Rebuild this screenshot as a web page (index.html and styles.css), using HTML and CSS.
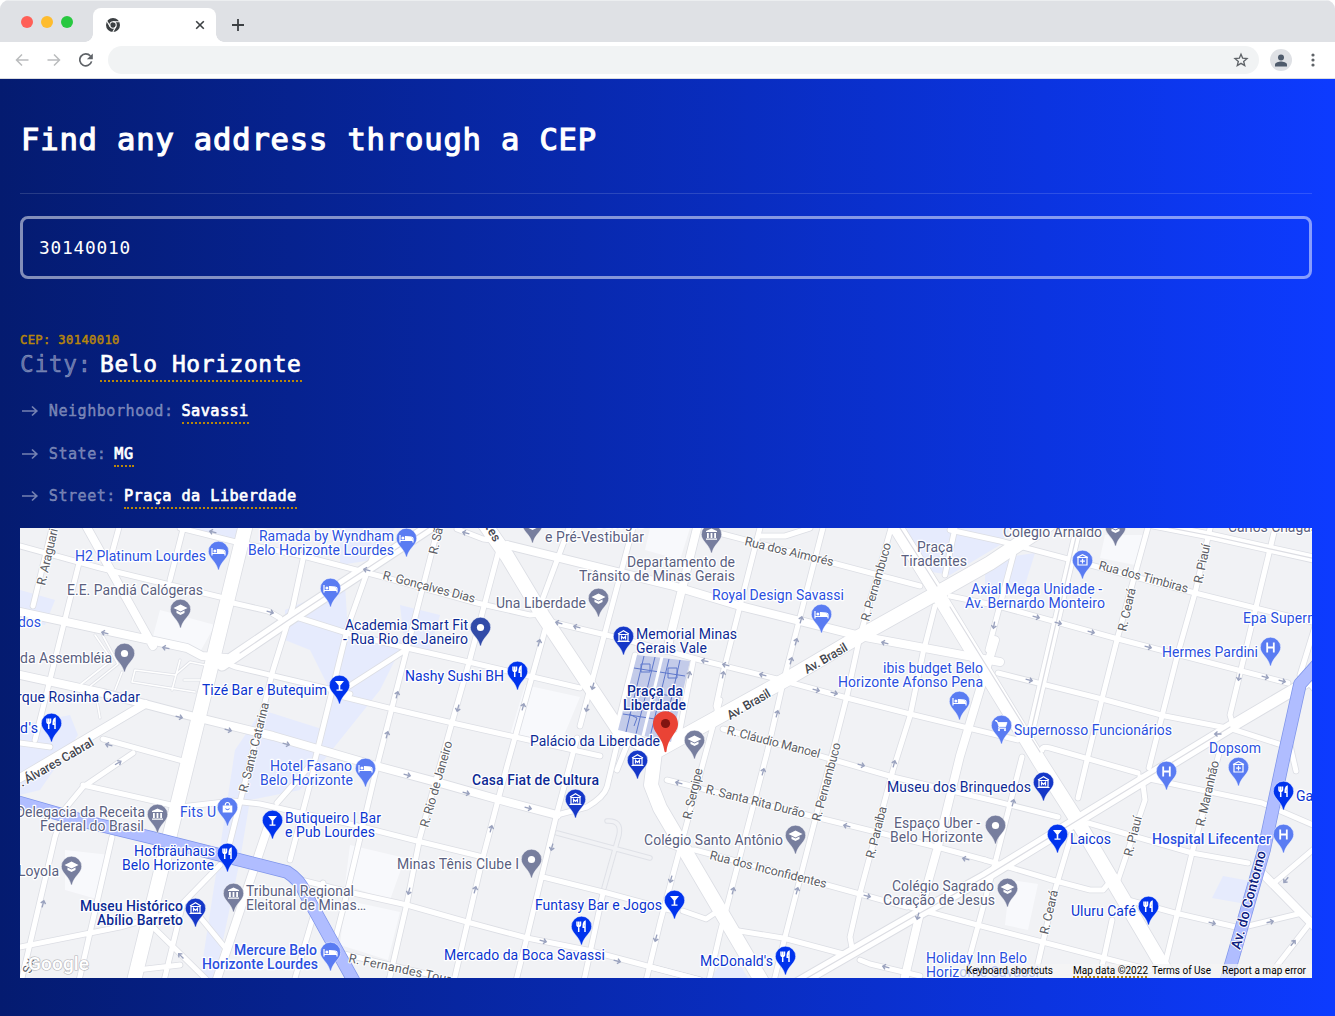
FILE: index.html
```html
<!DOCTYPE html>
<html lang="en">
<head>
<meta charset="utf-8">
<title>Find any address through a CEP</title>
<link rel="stylesheet" href="styles.css">
</head>
<body>
<div class="window">
  <div class="tabstrip">
    <div class="lights"><span class="light red"></span><span class="light yellow"></span><span class="light green"></span></div>
    <div class="tab">
      <svg width="14" height="14" viewBox="0 0 14 14"><circle cx="7" cy="7" r="7" fill="#3c4043"/><circle cx="7" cy="7" r="3.2" fill="#3c4043" stroke="#fff" stroke-width="1.1"/><path d="M7 3.7h6.3M4.2 8.6 1 3.2M9.9 8.6 6.8 14" stroke="#fff" stroke-width="1.1"/></svg>
      <svg width="10" height="10" viewBox="0 0 10 10"><path d="m1.2 1.2 7.6 7.6m0-7.6L1.2 8.8" stroke="#3c4043" stroke-width="1.6"/></svg>
    </div>
    <svg class="plus" width="12" height="12" viewBox="0 0 12 12"><path d="M6 0v12M0 6h12" stroke="#3c4043" stroke-width="1.8"/></svg>
  </div>
  <div class="toolbar">
    <svg width="14" height="12" viewBox="0 0 14 12" fill="none" stroke="#babcbe" stroke-width="1.5"><path d="M13.500 6H1.500M7 .5 1.500 6 7 11.500"/></svg>
    <svg width="14" height="12" viewBox="0 0 14 12" fill="none" stroke="#babcbe" stroke-width="1.5"><path d="M.5 6h12M7 .5 12.500 6 7 11.500"/></svg>
    <svg width="14" height="14" viewBox="0 0 14 14"><path d="M12.600 8.400A6 6 0 1 1 11.400 3" fill="none" stroke="#5f6368" stroke-width="1.700"/><path d="M13.800.4v5.900H7.900z" fill="#5f6368"/></svg>
    <div class="omnibox">
      <svg width="16" height="16" viewBox="0 0 24 24"><path d="m12 3.300 2.500 6 6.500.6-5 4.200 1.600 6.400-5.600-3.500-5.600 3.500L8 14.100 3 9.900l6.500-.6z" fill="none" stroke="#5f6368" stroke-width="2"/></svg>
    </div>
    <div class="avatar"><svg width="12" height="13" viewBox="0 0 12 13" fill="#4f5b6c"><circle cx="6" cy="3.500" r="3"/><path d="M0 12.500v-2C0 8.500 4 7.500 6 7.500s6 1 6 3v2z"/></svg></div>
    <svg width="4" height="14" viewBox="0 0 4 14" fill="#5f6368"><circle cx="2" cy="2" r="1.600"/><circle cx="2" cy="7" r="1.600"/><circle cx="2" cy="12" r="1.600"/></svg>
  </div>
  <main class="page">
    <h1 class="title">Find any address through a CEP</h1>
    <input class="search" type="text" value="30140010" aria-label="CEP">
    <section class="result">
      <div class="cep">CEP: 30140010</div>
      <h2 class="city"><span class="key">City:</span><span class="value">Belo Horizonte</span></h2>
      <ul class="fields">
        <li><svg class="arrow" viewBox="0 0 20 12"><path d="M2 6h15M12 1.500 16.800 6l-4.800 4.500"/></svg><span class="key">Neighborhood:</span><span class="value">Savassi</span></li>
        <li><svg class="arrow" viewBox="0 0 20 12"><path d="M2 6h15M12 1.500 16.800 6l-4.800 4.500"/></svg><span class="key">State:</span><span class="value">MG</span></li>
        <li><svg class="arrow" viewBox="0 0 20 12"><path d="M2 6h15M12 1.500 16.800 6l-4.800 4.500"/></svg><span class="key">Street:</span><span class="value">Praça da Liberdade</span></li>
      </ul>
    </section>
    <svg class="map" viewBox="20 528 1292 450">
      <defs>
        <g id="minor">
          <path d="M54 520 33 606M80 559 35 740M121 520 112 553M183 529 170 580M20 546 100 568 220 597M233 603 268 611 280 618M180 528 240 543 303 556 383 577 477 603 530 615 545 614"/>
          <path d="M20 743 50 747M103 739 190 763M226 660Q228 665 236 667L350 694M305 550 293 606 273 670 253 750 228 850M375 550 348 626 315 760 277 803"/>
          <path d="M293 616 350 634 407 648 473 663 580 688M407 649 340 692M340 696 393 709 457 724 600 756M440 520 407 649 377 766 347 893 330 960M500 546 470 659 453 719 420 837 407 903 388 985"/>
          <path d="M547 623 507 766 483 857 453 985M457 529 483 539 500 541M572 520 540 606M547 621 627 640 700 660 777 679 847 698 910 714 1018 740M635 520 580 726M133 753 83 787 64 810 55 837 22 978M83 785 180 807 233 801 260 804 350 824 413 840 483 857"/>
          <path d="M112 837 78 985M220 865 183 903 163 985M20 947 120 927 180 910M153 927 210 983M200 917 227 950M137 970 180 965M323 883 293 985M315 765 290 860M293 878 353 893 407 905 467 922 527 938 587 950 700 980M340 953 460 982"/>
          <path d="M577 738 557 813 527 937 515 985M543 877 607 893 670 910M603 893 583 985M720 700 660 923 645 985M683 911 706 919 718 911M733 930 783 938 847 955M860 960 870 964 920 976M650 967 700 980M627 745 617 770"/>
          <path d="M762 520 740 606 723 673 716 706 720 718M825 520 783 683 767 753 720 933 708 985M892 525 860 636 847 696 803 867 785 937 773 985M935 606 923 653 910 716 893 770 860 893 850 937 852 948M715 532 920 586"/>
          <path d="M760 536 785 536 810 528M950 596 998 606 1118 639 1288 683M723 729 820 756 893 777 990 800 1058 817M955 528 945 575M950 530 1000 541 1068 559 1195 593 1320 624M1150 520 1118 636 1102 699 1088 756 1078 798"/>
          <path d="M1212 520 1195 593 1178 653 1162 716 1149 768M1277 520 1230 715 1233 725M1317 620 1300 675M1016 545 988 650M998 673 1102 699 1165 716 1232 729 1285 746M1042 750Q1042 746 1050 748L1138 773M1140 777 1262 803 1320 828M1315 690 1302 675"/>
          <path d="M1088 823 1192 853 1248 863M1143 785 1145 800 1118 880M1220 750 1192 853 1160 985M1022 757 995 863 962 985M1072 833 1055 890 1033 985M985 860 1052 880 1090 890 1103 890 1115 876M1128 900 1175 913 1240 928 1302 913M910 907 985 927 1150 970M1112 920 1098 985"/>
          <path d="M1275 882 1315 848M1310 923 1262 985M1290 745 1296 771M667 780 807 815 937 847 985 860M660 840Q680 851 695 850L827 885 907 907"/>
          <path d="M617 745 607 787Q604 797 587 807L557 815M635 655 615 735M693 662 678 740"/>
        </g>
        <g id="medium">
          <path d="M85 524 153 646M20 612 187 648 202 656 226 658M20 675 103 693 187 715 273 736 380 767 440 783 500 800 557 815M507 545 670 585 740 606 860 636 1000 662M699 520 667 650M995 640 960 756 937 850 923 900 903 985M272 815 215 985"/>
          <path d="M1080 520 1030 735M1140 522 1212 536 1320 560M1262 873 1320 932M145 704 20 778"/>
        </g>
        <g id="dual"><path d="M222 665 287 621 433 525M1305 683 1232 726 1078 820 985 877 920 913 795 985"/></g>
        <g id="major">
          <path d="M247 520 190 753 133 985M482 520 507 556 543 616 620 732 655 752 651 785 660 808 764 985M655 752 787 679 860 636 937 593 990 563 1055 520M893 522 937 593 990 680 1040 762 1075 817 1118 890 1174 985"/>
        </g>
        <path id="drop" d="M0-10.300A10.200 10.200 0 0 0-10.200 0C-10.200 6.500-2.500 9.500-.7 17.800Q0 19 .7 17.800C2.500 9.500 10.200 6.500 10.200 0A10.200 10.200 0 0 0 0-10.300z" stroke="#fff" stroke-opacity=".6" stroke-width=".8"/>
        <g id="bed"><use href="#drop"/><path d="M-6.500-3.500V4M-6 2H6.500V4M6.500 2V0Q6.500-2-1-2V2" fill="none" stroke="#fff" stroke-width="1.200"/><path d="M-.5-1.500H4Q6-1.500 6 1.500H-.5z" fill="#fff"/><circle cx="-3.600" cy="-.5" r="1.500" fill="#fff"/></g>
        <g id="school"><use href="#drop"/><path d="M0-5 7-1.500 0 2-7-1.500zM-4 1 0 3 4 1V3.500L0 5.500-4 3.500z" fill="#fff"/></g>
        <g id="dot"><use href="#drop"/><circle r="3.600" fill="#fff"/></g>
        <g id="food"><use href="#drop"/><path d="M-4.500-5V-2Q-4.500 0-2.800 0T-1-2V-5M-2.800-5V5.500M3.500 5.500V-5Q1.600-4 1.700.8H3.500" fill="none" stroke="#fff" stroke-width="1.500"/></g>
        <g id="bar"><use href="#drop"/><path d="M-4.500-4.500H4.500L.8 0V4H3V5.200H-3V4H-.8V0z" fill="#fff"/></g>
        <g id="museum"><use href="#drop"/><path d="M-5.500-2.500 0-5.800 5.500-2.500M-4.500-2V4.500H4.500V-2zM-6 5H6M-2 3V-.2L0 1.800 2-.2V3" fill="none" stroke="#fff" stroke-width="1.200"/></g>
        <g id="civic"><use href="#drop"/><path d="M-5.500-2.500V-3.500L0-6 5.500-3.500V-2.500zM-4.500-1.500H-2.700V3.500H-4.500zM-.9-1.500H.9V3.500H-.9zM2.700-1.500H4.500V3.500H2.700zM-5.500 4H5.500V5.200H-5.500z" fill="#fff"/></g>
        <g id="hosp"><use href="#drop"/><path d="M-3.300-5V5M3.300-5V5M-3 0H3" stroke="#fff" stroke-width="1.800"/></g>
        <g id="health"><use href="#drop"/><path d="M-5.500-3 0-5.800 5.500-3M-4.500-3V4.500H4.500V-3zM0-1.800V3M-2.400.6H2.400" fill="none" stroke="#fff" stroke-width="1.200"/></g>
        <g id="cart"><use href="#drop"/><path d="M-6.500-5H-4.500L-2.500 1.300H4L5.500-3H-3.500z" fill="#fff" stroke="#fff" stroke-width=".8"/><path d="M-2.500 1.300-3 2.800H4.500" fill="none" stroke="#fff"/><circle cx="-2.500" cy="4.600" r="1.100" fill="#fff"/><circle cx="3.500" cy="4.600" r="1.100" fill="#fff"/></g>
        <g id="bag"><use href="#drop"/><path d="M-4.800-2H4.800V5H-4.800z" fill="#fff"/><path d="M-2.300-2Q-2.300-5 0-5T2.300-2" fill="none" stroke="#fff" stroke-width="1.200"/><path d="M-2 1Q0 3.500 2 1" fill="none" stroke="#5a7cf2" stroke-width="1.100"/></g>
        <path id="dir" d="M-3.500 0H3M.5-2.500 3.300 0 .5 2.500" fill="none" stroke="#9aa2be" stroke-width="1.400"/>
      </defs>

      <rect x="20" y="528" width="1292" height="450" fill="#f1f2f5"/>
      <path class="shop" d="M285 610 345 585 348 632 405 640 380 690 300 790 250 800 240 860 215 978 200 978 235 750 262 710 325 730 330 690 310 650 285 640zM900 528H1010L1000 545 950 575 920 570zM20 590 55 600 45 625 20 620zM20 725 70 715 78 735 40 790 20 795zM985 560 1035 553 1025 585 985 590zM1223 876 1250 881 1246 904 1212 898zM340 528 395 528 372 560 340 565zM400 605 440 615 430 650 405 648zM720 965 740 965 748 978 710 978zM180 528 245 528 240 540z"/>
      <path class="pale" d="M160 610 215 625 200 652 152 640zM525 685 580 697 560 745 510 735zM350 845 405 858 390 900 345 885zM345 900 400 912 388 960 340 945zM65 850 110 855 100 900 65 890zM1105 535 1145 535 1135 565 1100 558zM1010 880 1038 884 1028 930 1005 925zM650 528H690L680 560 645 550z"/>
      <path class="parkpath" d="M95 635 112 660 80 685M103 636 118 664 88 688M135 670 175 675 190 662 205 665M135 670 132 682 195 692M122 672 115 690M180 660 172 690M184 680H200M95 690 100 718"/>
      <path class="alley-edge" d="M557 833 650 858M607 821Q622 820 619 835L604 888"/>
      <path class="alley" d="M557 833 650 858M607 821Q622 820 619 835L604 888"/>

      <g class="casing">
        <use href="#minor" stroke-width="6.600"/><use href="#medium" stroke-width="9.600"/><use href="#dual" stroke-width="13"/><use href="#major" stroke-width="15.600"/>
      </g>
      <g class="road">
        <use href="#minor" stroke-width="5"/><use href="#medium" stroke-width="8"/><use href="#dual" stroke-width="11"/><use href="#major" stroke-width="14"/>
      </g>
      <path class="parkpath white" d="M95 635 112 660 80 685M103 636 118 664 88 688M135 670 175 675 190 662 205 665M135 670 132 682 195 692M122 672 115 690M180 660 172 690M184 680H200M95 690 100 718"/>
      <path class="median" d="M240 653 287 621 433 525M1230 727 1078 820 985 877 920 913 795 985M1080 520 1030 735M1150 524 1212 536 1320 560M900 528 937 586M950 607 1040 752"/>

      <path class="water-edge" d="M10 800 87 822 153 838 220 855 287 872Q300 880 305 893L356 985M1318 664 1300 684 1284 756 1264 850 1225 985"/>
      <path class="water" d="M10 800 87 822 153 838 220 855 287 872Q300 880 305 893L356 985M1318 664 1300 684 1284 756 1264 850 1225 985"/>

      <path d="M637 655 690 661 671 742 618 730z" fill="#c3cbe9"/>
      <path d="M644 656 626 732M655 657 636 734M669 659 650 737M680 660 662 740M634 668 685 676M630 690 680 697M623 714 674 722M641 664h9v8h-9zM668 668h9v10h-9zM629 714l8 4-3 8" fill="none" stroke="#5f78cc" stroke-width="1"/>
      <path d="M662 657 643 736" stroke="#fff" stroke-width="3"/>

      <g class="arrows">
        <use href="#dir" transform="translate(213 532) rotate(194)"/><use href="#dir" transform="translate(270 612) rotate(15)"/><use href="#dir" transform="translate(105 633) rotate(194)"/><use href="#dir" transform="translate(166 648) rotate(190)"/><use href="#dir" transform="translate(179 717) rotate(14)"/><use href="#dir" transform="translate(228 730) rotate(14)"/><use href="#dir" transform="translate(286 744) rotate(14)"/><use href="#dir" transform="translate(109 745) rotate(194)"/>
        <use href="#dir" transform="translate(466 533) rotate(194)"/><use href="#dir" transform="translate(367 570) rotate(194)"/><use href="#dir" transform="translate(559 623) rotate(194)"/><use href="#dir" transform="translate(577 627) rotate(194)"/><use href="#dir" transform="translate(539 643) rotate(-75)"/><use href="#dir" transform="translate(593 686) rotate(105)"/><use href="#dir" transform="translate(587 708) rotate(105)"/><use href="#dir" transform="translate(523 707) rotate(-75)"/><use href="#dir" transform="translate(458 708) rotate(105)"/><use href="#dir" transform="translate(397 695) rotate(-75)"/><use href="#dir" transform="translate(387 735) rotate(-75)"/>
        <use href="#dir" transform="translate(801 620) rotate(-75)"/><use href="#dir" transform="translate(796 642) rotate(-75)"/><use href="#dir" transform="translate(791 661) rotate(-75)"/><use href="#dir" transform="translate(705 661) rotate(190)"/><use href="#dir" transform="translate(726 665) rotate(194)"/><use href="#dir" transform="translate(763 675) rotate(194)"/><use href="#dir" transform="translate(816 690) rotate(14)"/><use href="#dir" transform="translate(834 693) rotate(14)"/><use href="#dir" transform="translate(885 643) rotate(194)"/><use href="#dir" transform="translate(689 675) rotate(-75)"/><use href="#dir" transform="translate(723 675) rotate(-80)"/><use href="#dir" transform="translate(777 714) rotate(-75)"/>
        <use href="#dir" transform="translate(1036 617) rotate(14)"/><use href="#dir" transform="translate(1058 623) rotate(14)"/><use href="#dir" transform="translate(1091 632) rotate(14)"/><use href="#dir" transform="translate(1148 647) rotate(14)"/><use href="#dir" transform="translate(1265 677) rotate(14)"/><use href="#dir" transform="translate(1282 681) rotate(14)"/><use href="#dir" transform="translate(1239 677) rotate(100)"/><use href="#dir" transform="translate(1029 680) rotate(14)"/><use href="#dir" transform="translate(994 625) rotate(100)"/><use href="#dir" transform="translate(1218 734) rotate(180)"/>
        <use href="#dir" transform="translate(118 763) rotate(-30)"/><use href="#dir" transform="translate(43 904) rotate(-75)"/><use href="#dir" transform="translate(181 956) rotate(225)"/><use href="#dir" transform="translate(407 775) rotate(14)"/><use href="#dir" transform="translate(466 793) rotate(14)"/><use href="#dir" transform="translate(528 808) rotate(14)"/><use href="#dir" transform="translate(491 829) rotate(-75)"/><use href="#dir" transform="translate(552 847) rotate(105)"/><use href="#dir" transform="translate(475 890) rotate(-75)"/><use href="#dir" transform="translate(409 891) rotate(105)"/><use href="#dir" transform="translate(543 941) rotate(14)"/><use href="#dir" transform="translate(617 961) rotate(14)"/><use href="#dir" transform="translate(656 938) rotate(105)"/>
        <use href="#dir" transform="translate(679 783) rotate(194)"/><use href="#dir" transform="translate(763 772) rotate(-75)"/><use href="#dir" transform="translate(861 765) rotate(14)"/><use href="#dir" transform="translate(894 764) rotate(-75)"/><use href="#dir" transform="translate(847 826) rotate(194)"/><use href="#dir" transform="translate(966 859) rotate(194)"/><use href="#dir" transform="translate(733 891) rotate(-75)"/><use href="#dir" transform="translate(797 891) rotate(-75)"/><use href="#dir" transform="translate(867 896) rotate(14)"/><use href="#dir" transform="translate(918 916) rotate(105)"/><use href="#dir" transform="translate(671 879) rotate(105)"/><use href="#dir" transform="translate(886 967) rotate(194)"/><use href="#dir" transform="translate(1013 803) rotate(-75)"/><use href="#dir" transform="translate(1212 923) rotate(14)"/><use href="#dir" transform="translate(1270 922) rotate(-12)"/><use href="#dir" transform="translate(1286 880) rotate(130)"/><use href="#dir" transform="translate(1293 943) rotate(-50)"/>
      </g>

      <g class="street">
        <text transform="translate(45 586) rotate(-77)" textLength="58">R. Araguari</text>
        <text class="dark" transform="translate(22 787) rotate(-30)" textLength="84">. Álvares Cabral</text>
        <text transform="translate(247 793) rotate(-76)" textLength="92">R. Santa Catarina</text>
        <text transform="translate(428 828) rotate(-74)" textLength="89">R. Rio de Janeiro</text>
        <text transform="translate(437 555) rotate(-77)" textLength="34">R. São</text>
        <text transform="translate(382 579) rotate(14.500)" textLength="95">R. Gonçalves Dias</text>
        <text class="dark" transform="translate(485 527) rotate(60)" textLength="18">tes</text>
        <text transform="translate(744 545) rotate(13.500)" textLength="91">Rua dos Aimorés</text>
        <text transform="translate(869 622) rotate(-74)" textLength="81">R. Pernambuco</text>
        <text transform="translate(820 822) rotate(-75)" textLength="81">R. Pernambuco</text>
        <text class="dark" transform="translate(807 674) rotate(-30)" textLength="48">Av. Brasil</text>
        <text class="dark" transform="translate(730 720) rotate(-30)" textLength="48">Av. Brasil</text>
        <text transform="translate(726 734) rotate(14.500)" textLength="96">R. Cláudio Manoel</text>
        <text transform="translate(691 820) rotate(-77)" textLength="52">R. Sergipe</text>
        <text transform="translate(705 793) rotate(14)" textLength="102">R. Santa Rita Durão</text>
        <text transform="translate(709 859) rotate(14)" textLength="120">Rua dos Inconfidentes</text>
        <text transform="translate(874 859) rotate(-76)" textLength="53">R. Paraíba</text>
        <text transform="translate(1098 569) rotate(15)" textLength="92">Rua dos Timbiras</text>
        <text transform="translate(1126 632) rotate(-77)" textLength="44">R. Ceará</text>
        <text transform="translate(1202 584) rotate(-78)" textLength="40">R. Piauí</text>
        <text transform="translate(1132 857) rotate(-76)" textLength="41">R. Piauí</text>
        <text transform="translate(1204 827) rotate(-77)" textLength="67">R. Maranhão</text>
        <text transform="translate(1048 935) rotate(-77)" textLength="45">R. Ceará</text>
        <text transform="translate(348 962) rotate(12)" textLength="104">R. Fernandes Tour</text>
        <text transform="translate(31 974) rotate(-77)" textLength="15">Sx</text>
        <text class="navy" transform="translate(1240 950) rotate(-75)" textLength="101">Av. do Contorno</text>
      </g>

      <g class="label gray">
        <text x="67" y="595" textLength="136">E.E. Pandiá Calógeras</text><text x="20" y="663" textLength="92">da Assembléia</text>
        <text x="496" y="608" textLength="90">Una Liberdade</text><text x="545" y="542" textLength="99">e Pré-Vestibular</text><text x="595" y="528" textLength="50">Colégio</text>
        <text x="627" y="567" textLength="108">Departamento de</text><text x="579" y="581" textLength="156">Trânsito de Minas Gerais</text>
        <text x="917" y="552" textLength="36">Praça</text><text x="901" y="566" textLength="66">Tiradentes</text><text x="1003" y="537" textLength="99">Colégio Arnaldo</text><text x="1228" y="532" textLength="90">Carlos Chagas</text>
        <text x="16" y="817" textLength="129">Delegacia da Receita</text><text x="40" y="831" textLength="104">Federal do Brasil</text><text x="18" y="876" textLength="41">Loyola</text>
        <text x="246" y="896" textLength="108">Tribunal Regional</text><text x="246" y="910" textLength="120">Eleitoral de Minas…</text><text x="397" y="869" textLength="122">Minas Tênis Clube I</text>
        <text x="644" y="845" textLength="139">Colégio Santo Antônio</text><text x="894" y="828" textLength="86">Espaço Uber -</text><text x="890" y="842" textLength="93">Belo Horizonte</text><text x="892" y="891" textLength="102">Colégio Sagrado</text><text x="883" y="905" textLength="112">Coração de Jesus</text>
      </g>
      <g class="label hotel">
        <text x="75" y="561" textLength="131">H2 Platinum Lourdes</text><text x="259" y="541" textLength="135">Ramada by Wyndham</text><text x="248" y="555" textLength="146">Belo Horizonte Lourdes</text>
        <text x="18" y="627" textLength="23">dos</text><text x="712" y="600" textLength="132">Royal Design Savassi</text><text x="883" y="673" textLength="100">ibis budget Belo</text><text x="838" y="687" textLength="145">Horizonte Afonso Pena</text>
        <text x="971" y="594" textLength="131">Axial Mega Unidade -</text><text x="965" y="608" textLength="140">Av. Bernardo Monteiro</text><text x="1243" y="623" textLength="84">Epa Superme</text><text x="1162" y="657" textLength="96">Hermes Pardini</text><text x="1014" y="735" textLength="158">Supernosso Funcionários</text><text x="1209" y="753" textLength="52">Dopsom</text>
        <text x="270" y="771" textLength="82">Hotel Fasano</text><text x="260" y="785" textLength="93">Belo Horizonte</text><text x="180" y="817" textLength="36">Fits U</text><text class="medium" x="1152" y="844" textLength="119">Hospital Lifecenter</text>
        <text class="medium" x="234" y="955" textLength="83">Mercure Belo</text><text class="medium" x="202" y="969" textLength="116">Horizonte Lourdes</text><text x="926" y="963" textLength="101">Holiday Inn Belo</text><text x="926" y="977" textLength="113">Horizonte Savassi</text>
      </g>
      <g class="label eat">
        <text x="202" y="695" textLength="125">Tizé Bar e Butequim</text><text x="405" y="681" textLength="99">Nashy Sushi BH</text><text x="20" y="733" textLength="18">d's</text><text x="285" y="823" textLength="96">Butiqueiro | Bar</text><text x="285" y="837" textLength="90">e Pub Lourdes</text>
        <text x="134" y="856" textLength="81">Hofbräuhaus</text><text x="122" y="870" textLength="92">Belo Horizonte</text><text x="535" y="910" textLength="127">Funtasy Bar e Jogos</text><text x="444" y="960" textLength="161">Mercado da Boca Savassi</text><text x="700" y="966" textLength="73">McDonald's</text><text x="1070" y="844" textLength="41">Laicos</text><text x="1071" y="916" textLength="65">Uluru Café</text><text x="1296" y="801" textLength="17">Ga</text>
      </g>
      <g class="label museum">
        <text x="345" y="630" textLength="123">Academia Smart Fit</text><text x="343" y="644" textLength="125">- Rua Rio de Janeiro</text><text x="17" y="702" textLength="123">rque Rosinha Cadar</text><text x="636" y="639" textLength="101">Memorial Minas</text><text x="636" y="653" textLength="71">Gerais Vale</text>
        <text class="medium" x="627" y="696" textLength="56">Praça da</text><text class="medium" x="623" y="710" textLength="63">Liberdade</text><text x="530" y="746" textLength="130">Palácio da Liberdade</text><text class="medium" x="472" y="785" textLength="127">Casa Fiat de Cultura</text><text x="887" y="792" textLength="144">Museu dos Brinquedos</text><text class="medium" x="80" y="911" textLength="103">Museu Histórico</text><text class="medium" x="97" y="925" textLength="86">Abílio Barreto</text>
      </g>

      <g transform="translate(.5 .5)">
        <g fill="#5a7cf2">
          <use href="#bed" x="218" y="551"/><use href="#bed" x="406" y="538"/><use href="#bed" x="330" y="588"/><use href="#bed" x="821" y="614"/><use href="#bed" x="959" y="701"/><use href="#bed" x="365" y="768"/><use href="#bed" x="330" y="952"/>
          <use href="#health" x="1082" y="560"/><use href="#health" x="1238" y="767"/><use href="#hosp" x="1270" y="647"/><use href="#hosp" x="1166" y="771"/><use href="#hosp" x="1283" y="834"/><use href="#cart" x="1001" y="725"/><use href="#bag" x="227" y="807"/>
        </g>
        <g fill="#777e9e">
          <use href="#school" x="180" y="609"/><use href="#dot" x="124" y="653"/><use href="#school" x="532" y="524"/><use href="#school" x="598" y="598"/><use href="#civic" x="711" y="534"/><use href="#school" x="1115" y="527"/><use href="#school" x="694" y="740"/><use href="#civic" x="157" y="814"/><use href="#school" x="71" y="866"/><use href="#civic" x="233" y="893"/><use href="#dot" x="531" y="859"/><use href="#school" x="795" y="835"/><use href="#dot" x="995" y="825"/><use href="#school" x="1007" y="888"/>
        </g>
        <g fill="#0033ed">
          <use href="#bar" x="339" y="685"/><use href="#food" x="517" y="671"/><use href="#food" x="51" y="723"/><use href="#bar" x="272" y="820"/><use href="#food" x="227" y="853"/><use href="#bar" x="674" y="900"/><use href="#food" x="581" y="926"/><use href="#food" x="785" y="956"/><use href="#bar" x="1057" y="834"/><use href="#food" x="1148" y="906"/><use href="#food" x="1283" y="791"/>
        </g>
        <g fill="#1537c8">
          <use href="#dot" x="480" y="627" fill="#314ba8"/><use href="#museum" x="623" y="636"/><use href="#museum" x="637" y="760"/><use href="#museum" x="575" y="799"/><use href="#museum" x="195" y="908"/><use href="#museum" x="1043" y="782"/>
        </g>
      </g>
      <path d="M665.500 711.300C658 711.300 653 717 653 724C653 733 663 737 664.500 751.500Q665.500 753 666.500 751.500C668 737 678 733 678 724C678 717 673 711.300 665.500 711.300z" fill="#ea4335"/>
      <circle cx="665.500" cy="723.500" r="4.600" fill="#811411"/>

      <text class="google" x="28" y="970" textLength="61">Google</text>
      <rect x="960" y="964" width="352" height="14" fill="#f5f5f5" opacity=".7"/>
      <g class="credits">
        <text x="966" y="974" textLength="87">Keyboard shortcuts</text><text x="1073" y="974" textLength="75">Map data ©2022</text><text x="1152" y="974" textLength="59">Terms of Use</text><text x="1222" y="974" textLength="84">Report a map error</text>
      </g>
      <path d="M1073 977H1148" stroke="#b8860b" stroke-width="2" stroke-dasharray="2 2"/>
    </svg>
  </main>
</div>
</body>
</html>
```
FILE: styles.css
```css
* { box-sizing: border-box; }
body { margin: 0; background: #fff; }
.window { height: 1016px; display: flex; flex-direction: column; overflow: hidden; border-radius: 9px 9px 0 0; }

.tabstrip { flex: none; height: 42px; background: #dfe1e5; border-top: 1px solid #eceef0; display: flex; align-items: flex-end; }
.lights { display: flex; gap: 8px; padding-left: 21px; width: 93px; height: 26.500px; }
.light { width: 12px; height: 12px; border-radius: 50%; }
.red { background: #ff5f57; }
.yellow { background: #febc2e; }
.green { background: #28c840; }
.tab { position: relative; width: 123px; height: 34px; padding: 0 11px 0 13px; background: #fff; border-radius: 8px 8px 0 0; display: flex; align-items: center; justify-content: space-between; }
.tab::before, .tab::after { content: ""; position: absolute; bottom: 0; width: 8px; height: 8px; }
.tab::before { left: -8px; background: radial-gradient(circle at 0 0, transparent 7.5px, #fff 8px); }
.tab::after { right: -8px; background: radial-gradient(circle at 100% 0, transparent 7.5px, #fff 8px); }
.plus { margin: 0 0 11px 16px; }

.toolbar { flex: none; height: 37px; background: #fff; border-bottom: 1px solid #dadce0; display: flex; align-items: center; padding: 0 20px 0 15px; gap: 18px; }
.omnibox { flex: 1; height: 28px; margin-left: -3px; border-radius: 14px; background: #f1f3f4; display: flex; align-items: center; justify-content: flex-end; padding-right: 10px; }
.avatar { width: 22px; height: 22px; margin: 0 1px 0 -7px; border-radius: 50%; background: #dfe1e5; display: flex; align-items: center; justify-content: center; }

.page { flex: 1; padding: 0 23px 38px 20px; background: linear-gradient(90deg, #041b70, #0d3bff); color: #fff; font-family: "DejaVu Sans Mono", monospace; display: flex; flex-direction: column; }
.title { margin: 0; height: 115px; padding: 41px 0 0 1px; font-size: 30.500px; line-height: 40px; letter-spacing: .838px; font-weight: 400; -webkit-text-stroke: 1.200px #fff; border-bottom: 1px solid rgba(255, 255, 255, .14); white-space: nowrap; }
.search { display: block; width: 100%; height: 63px; margin: 22px 0 0; padding: 0 16px; color: #fff; background: transparent; border: 3px solid rgba(255, 255, 255, .5); border-radius: 8px; outline: none; font: 17.800px "DejaVu Sans Mono", monospace; letter-spacing: .8px; }
.result { padding-top: 53px; height: 249px; }
.cep { height: 16px; font-size: 12.200px; line-height: 16px; letter-spacing: .335px; color: #b8860b; -webkit-text-stroke: .5px #b8860b; }
.city { margin: 0; display: flex; gap: 8px; height: 34px; font-size: 22.900px; line-height: 32px; letter-spacing: .614px; font-weight: 400; }
.key { color: rgba(255, 255, 255, .4); -webkit-text-stroke: .4px rgba(255, 255, 255, .4); }
.value { border-bottom: 2px dotted #b8860b; -webkit-text-stroke: .7px #fff; }
.fields { list-style: none; margin: 16px 0 0; padding: 0; display: grid; gap: 16.500px; font-size: 15.200px; line-height: 24px; letter-spacing: .45px; }
.fields li { display: flex; align-items: center; height: 26px; }
.fields .key { margin-right: 8px; padding-top: 1px; line-height: 25px; }
.fields .value { height: 26px; padding-top: 1px; line-height: 25px; }
.arrow { width: 20px; height: 12px; margin-right: 8.800px; fill: none; stroke: rgba(255, 255, 255, .45); stroke-width: 1.700; }

.map { display: block; width: 100%; height: 450px; font-family: Roboto, sans-serif; }
.casing, .road, .median, .parkpath, .alley, .alley-edge, .water, .water-edge { fill: none; stroke-linejoin: round; stroke-linecap: round; }
.casing { stroke: #dcdee4; }
.road { stroke: #fff; }
.median { stroke: #dcdde3; stroke-width: 1.200; }
.parkpath { stroke: #dfe1e7; stroke-width: 3; }
.parkpath.white { stroke: #fff; stroke-width: 1.600; }
.alley-edge { stroke: #dfe1e7; stroke-width: 5.500; }
.alley { stroke: #f1f2f5; stroke-width: 3.500; }
.shop { fill: #e6ebfd; }
.pale { fill: #f8f9fc; }
.water { stroke: #b0bdff; stroke-width: 12; }
.water-edge { stroke: #7f95ea; stroke-width: 13.500; }
.label text { font-size: 14px; stroke: #fff; stroke-width: 2.500px; stroke-linejoin: round; paint-order: stroke; }
.label .medium, .street .navy { font-weight: 500; }
.gray { fill: #5a607f; }
.hotel { fill: #2a50e0; }
.eat { fill: #0b35d0; }
.museum { fill: #0d2a94; }
.street text { font-size: 12.500px; fill: #5c5e66; stroke: #fff; stroke-width: 2px; paint-order: stroke; stroke-linejoin: round; }
.street .dark { fill: #45474f; font-weight: 500; }
.street .navy { font-size: 14px; fill: #0d2080; }
.google { font-size: 19px; font-weight: 500; fill: #fff; stroke: #b4b5b9; stroke-width: 1.200px; paint-order: stroke; }
.credits { font-size: 10px; fill: #000; }
```
